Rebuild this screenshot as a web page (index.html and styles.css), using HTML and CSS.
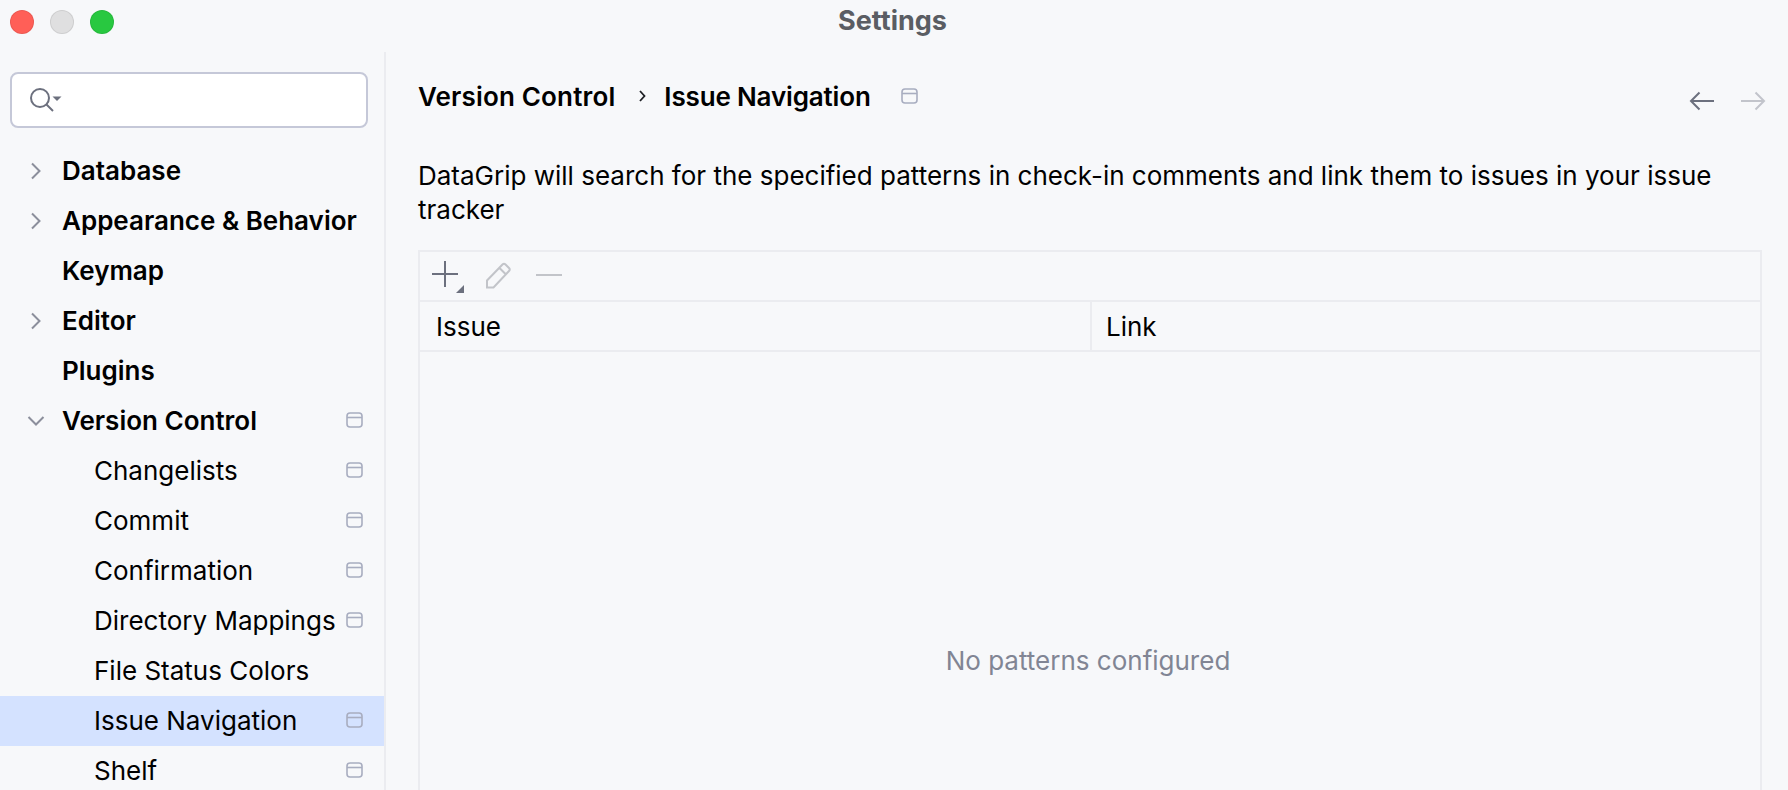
FILE: index.html
```html
<!DOCTYPE html>
<html lang="en">
<head>
  <meta charset="UTF-8">
  <title>Settings</title>
  <link rel="stylesheet" href="styles.css">
</head>
<body>

  <header class="titlebar">
    <div class="lights">
      <span class="light red"></span>
      <span class="light grey"></span>
      <span class="light green"></span>
    </div>
    <div class="title">Settings</div>
  </header>

  <div class="main">
    <aside class="sidebar">
      <div class="search">
        <svg class="search-icon" width="34" height="28" viewBox="0 0 34 28" fill="none">
          <circle cx="11" cy="11" r="9" stroke="#6c707e" stroke-width="2"/>
          <path d="M17.5 17.5L24 24" stroke="#6c707e" stroke-width="2"/>
          <path d="M23.5 9.5H32.5L28 14Z" fill="#6c707e"/>
        </svg>
      </div>

      <ul class="tree">
        <li class="row top">
          <svg class="chev" width="14" height="18" viewBox="0 0 14 18" fill="none"><path d="M3 1.500L10.500 9L3 16.500" stroke="#8c8f9c" stroke-width="2"/></svg>
          <span class="label">Database</span>
        </li>
        <li class="row top">
          <svg class="chev" width="14" height="18" viewBox="0 0 14 18" fill="none"><path d="M3 1.500L10.500 9L3 16.500" stroke="#8c8f9c" stroke-width="2"/></svg>
          <span class="label">Appearance &amp; Behavior</span>
        </li>
        <li class="row top"><span class="label">Keymap</span></li>
        <li class="row top">
          <svg class="chev" width="14" height="18" viewBox="0 0 14 18" fill="none"><path d="M3 1.500L10.500 9L3 16.500" stroke="#8c8f9c" stroke-width="2"/></svg>
          <span class="label">Editor</span>
        </li>
        <li class="row top"><span class="label">Plugins</span></li>
        <li class="row top">
          <svg class="chev open" width="18" height="14" viewBox="0 0 18 14" fill="none"><path d="M1.500 3L9 10.500L16.500 3" stroke="#8c8f9c" stroke-width="2"/></svg>
          <span class="label">Version Control</span>
          <svg class="win" width="17" height="16" viewBox="0 0 17 16" fill="none"><rect x="1" y="1" width="15" height="14" rx="3" stroke="#a8adc0" stroke-width="1.6"/><path d="M1 5.500H16" stroke="#a8adc0" stroke-width="1.6"/></svg>
        </li>
        <li class="row child">
          <span class="label">Changelists</span>
          <svg class="win" width="17" height="16" viewBox="0 0 17 16" fill="none"><rect x="1" y="1" width="15" height="14" rx="3" stroke="#a8adc0" stroke-width="1.6"/><path d="M1 5.500H16" stroke="#a8adc0" stroke-width="1.6"/></svg>
        </li>
        <li class="row child">
          <span class="label">Commit</span>
          <svg class="win" width="17" height="16" viewBox="0 0 17 16" fill="none"><rect x="1" y="1" width="15" height="14" rx="3" stroke="#a8adc0" stroke-width="1.6"/><path d="M1 5.500H16" stroke="#a8adc0" stroke-width="1.6"/></svg>
        </li>
        <li class="row child">
          <span class="label">Confirmation</span>
          <svg class="win" width="17" height="16" viewBox="0 0 17 16" fill="none"><rect x="1" y="1" width="15" height="14" rx="3" stroke="#a8adc0" stroke-width="1.6"/><path d="M1 5.500H16" stroke="#a8adc0" stroke-width="1.6"/></svg>
        </li>
        <li class="row child">
          <span class="label">Directory Mappings</span>
          <svg class="win" width="17" height="16" viewBox="0 0 17 16" fill="none"><rect x="1" y="1" width="15" height="14" rx="3" stroke="#a8adc0" stroke-width="1.6"/><path d="M1 5.500H16" stroke="#a8adc0" stroke-width="1.6"/></svg>
        </li>
        <li class="row child"><span class="label">File Status Colors</span></li>
        <li class="row child selected">
          <span class="label">Issue Navigation</span>
          <svg class="win" width="17" height="16" viewBox="0 0 17 16" fill="none"><rect x="1" y="1" width="15" height="14" rx="3" stroke="#a8adc0" stroke-width="1.6"/><path d="M1 5.500H16" stroke="#a8adc0" stroke-width="1.6"/></svg>
        </li>
        <li class="row child">
          <span class="label">Shelf</span>
          <svg class="win" width="17" height="16" viewBox="0 0 17 16" fill="none"><rect x="1" y="1" width="15" height="14" rx="3" stroke="#a8adc0" stroke-width="1.6"/><path d="M1 5.500H16" stroke="#a8adc0" stroke-width="1.6"/></svg>
        </li>
      </ul>
    </aside>

    <section class="content">
      <div class="crumbs">
        <span class="crumb parent">Version Control</span>
        <svg class="crumb-sep" width="8" height="14" viewBox="0 0 8 14" fill="none"><path d="M2 2L6.500 7L2 12" stroke="#1d1f24" stroke-width="1.800"/></svg>
        <span class="crumb current">Issue Navigation</span>
        <svg class="crumb-win" width="17" height="16" viewBox="0 0 17 16" fill="none"><rect x="1" y="1" width="15" height="14" rx="3" stroke="#a8adc0" stroke-width="1.6"/><path d="M1 5.500H16" stroke="#a8adc0" stroke-width="1.6"/></svg>
        <div class="nav">
          <svg width="26" height="20" viewBox="0 0 26 20" fill="none"><path d="M25 10H2M10.500 1.500L2 10L10.500 18.500" stroke="#6c707e" stroke-width="2"/></svg>
          <svg width="26" height="20" viewBox="0 0 26 20" fill="none"><path d="M1 10H24M15.500 1.500L24 10L15.500 18.500" stroke="#c2c4cb" stroke-width="2"/></svg>
        </div>
      </div>

      <p class="desc">DataGrip will search for the specified patterns in check-in comments and link them to issues in your issue tracker</p>

      <div class="panel">
        <div class="toolbar">
          <div class="tool add">
            <svg width="32" height="32" viewBox="0 0 32 32" fill="none">
              <path d="M13 0V26M0 13H26" stroke="#6c707e" stroke-width="2"/>
              <path d="M32 24V32H24Z" fill="#6c707e"/>
            </svg>
          </div>
          <div class="tool pencil">
            <svg width="26" height="27" viewBox="0 0 26 27" fill="none">
              <path d="M2 25.500V18.500L17.500 2.500Q19 1 20.500 2.500L24 6Q25.500 7.500 24 9L8.500 25.500ZM14.500 6L21 12.500" stroke="#c2c4c9" stroke-width="2"/>
            </svg>
          </div>
          <div class="tool minus">
            <svg width="26" height="4" viewBox="0 0 26 4" fill="none"><path d="M0 2H26" stroke="#c2c4c9" stroke-width="2"/></svg>
          </div>
        </div>
        <div class="head">
          <div class="col issue">Issue</div>
          <div class="col link">Link</div>
        </div>
        <div class="empty">No patterns configured</div>
      </div>
    </section>
  </div>

</body>
</html>
```

FILE: styles.css
```css
:root {
  --bg-color: #f7f8fa;
  --text-color: #000;
  --border-color: #ebecf0;
  --selected-color: #d4e2ff;
}

* {
  box-sizing: border-box;
}

html, body {
  height: 100%;
}

body {
  margin: 0;
  overflow: hidden;
  background-color: var(--bg-color);
  color: var(--text-color);
  font-family: Inter, "Liberation Sans", sans-serif;
  font-size: 26px;
  display: flex;
  flex-direction: column;
}

.titlebar {
  height: 52px;
  flex: none;
  display: flex;
  align-items: flex-start;
  justify-content: center;
  padding-right: 3px;
  position: relative;
}

.lights {
  position: absolute;
  left: 10px;
  top: 10px;
  display: flex;
  gap: 16px;
}

.light {
  width: 24px;
  height: 24px;
  border-radius: 50%;
  border: 1px solid rgba(0, 0, 0, 0.08);
}

.red {
  background-color: #ff5f57;
}

.grey {
  background-color: #dfdfe0;
}

.green {
  background-color: #28c840;
}

.title {
  font-size: 27px;
  font-weight: 700;
  line-height: 42px;
  color: #5a5d63;
}

.main {
  flex: 1;
  display: flex;
  min-height: 0;
  overflow: hidden;
}

.sidebar {
  width: 386px;
  flex: none;
  border-right: 2px solid var(--border-color);
  padding-top: 20px;
  overflow: hidden;
}

.search {
  width: 358px;
  height: 56px;
  margin-left: 10px;
  padding-left: 17px;
  display: flex;
  align-items: center;
  background-color: #fff;
  border: 2px solid #c5c8d8;
  border-radius: 8px;
}

.search-icon {
  margin-top: 2px;
}

.tree {
  list-style: none;
  margin: 18px 0 0;
  padding: 0;
}

.row {
  height: 50px;
  display: flex;
  align-items: center;
  position: relative;
  padding-left: 62px;
  line-height: 50px;
}

.row.top .label {
  font-weight: 600;
}

.row.child {
  padding-left: 94px;
}

.row.selected {
  background-color: var(--selected-color);
}

.chev {
  position: absolute;
  left: 29px;
  top: 16px;
}

.chev.open {
  left: 27px;
  top: 18px;
}

.win {
  position: absolute;
  left: 346px;
  top: 16px;
}

.content {
  flex: 1;
  min-width: 0;
  padding: 27px 26px 0 32px;
  overflow: hidden;
}

.crumbs {
  height: 34px;
  display: flex;
  align-items: center;
  font-weight: 600;
  position: relative;
}

.crumb.parent {
  letter-spacing: 0.16px;
}

.crumb.current {
  letter-spacing: -0.16px;
}

.crumb-sep {
  margin: 0 18px 0 23px;
}

.crumb-win {
  margin-left: 30px;
}

.nav {
  margin-left: auto;
  margin-top: 10px;
  margin-right: -4px;
  display: flex;
  gap: 25px;
}

.desc {
  margin: 46px 0 23px;
  line-height: 34px;
}

.panel {
  height: 720px;
  display: flex;
  flex-direction: column;
  border: 2px solid var(--border-color);
}

.toolbar {
  height: 50px;
  flex: none;
  display: flex;
  align-items: center;
  gap: 24px;
  padding-left: 12px;
  border-bottom: 2px solid var(--border-color);
}

.tool {
  display: flex;
  align-items: center;
}

.tool.add {
  margin-top: 2px;
  margin-right: -2px;
}

.tool.pencil {
  margin-top: -2px;
  margin-left: -1px;
  margin-right: 1px;
}

.tool.minus {
  margin-top: -2px;
}

.head {
  height: 50px;
  flex: none;
  display: flex;
  border-bottom: 2px solid var(--border-color);
}

.col {
  line-height: 50px;
}

.col.issue {
  width: 670px;
  flex: none;
  padding-left: 16px;
}

.col.link {
  flex: 1;
  padding-left: 14px;
  border-left: 2px solid var(--border-color);
}

.empty {
  flex: 1;
  display: flex;
  align-items: center;
  justify-content: center;
  padding-right: 4px;
  color: #818594;
}
```
